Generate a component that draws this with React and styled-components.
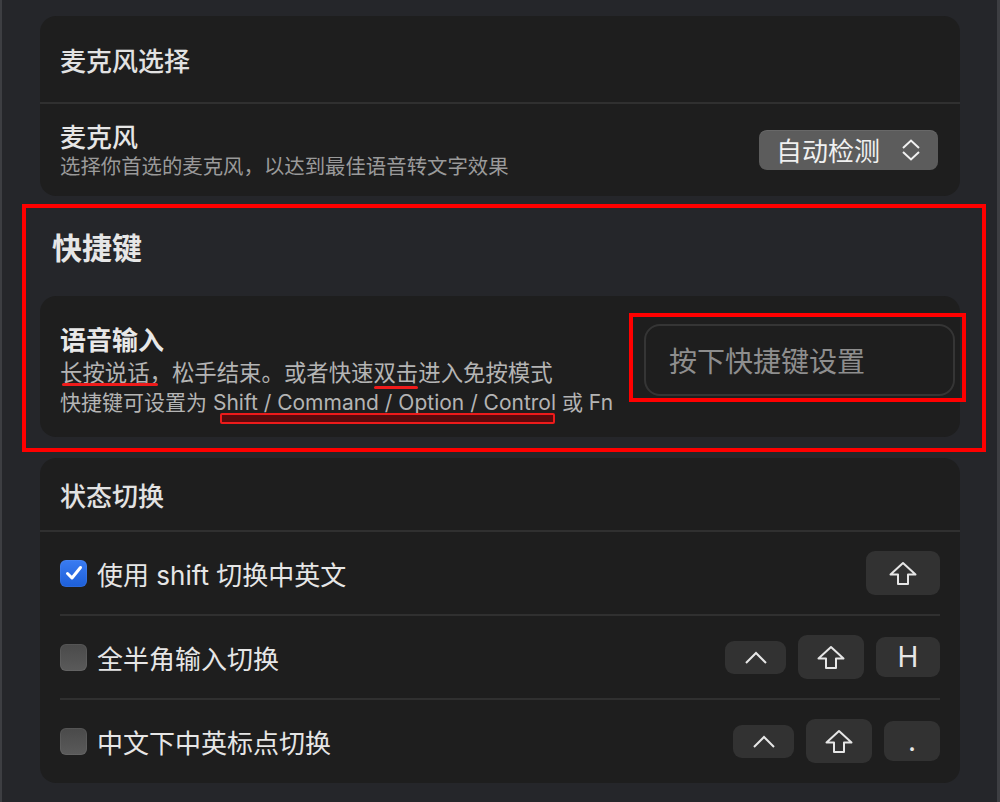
import React from 'react';
import styled, { createGlobalStyle } from 'styled-components';

const GlobalStyle = createGlobalStyle`
  * { box-sizing: border-box; }
  body {
    margin: 0;
    background: #25262a;
    font-family: "Inter", "Noto Sans CJK SC", sans-serif;
    color: #e4e4e4;
  }
`;

function ShiftIcon() {
  return (
    <svg width="30" height="25" viewBox="0 0 30 25" fill="none">
      <path d="M15 2 L27.5 13.5 H20 V23 H10 V13.5 H2.5 Z" stroke="#e6e6e6" strokeWidth="2" strokeLinejoin="round" />
    </svg>
  );
}

function CaretIcon() {
  return (
    <svg width="24" height="13" viewBox="0 0 24 13" fill="none">
      <path d="M2 12 L12 2 L22 12" stroke="#e6e6e6" strokeWidth="2" />
    </svg>
  );
}

function UpDownIcon() {
  return (
    <svg width="20" height="22" viewBox="0 0 20 22" fill="none">
      <path d="M2 9 L10 1.5 L18 9" stroke="#f0f0f0" strokeWidth="2" />
      <path d="M2 13 L10 20.5 L18 13" stroke="#f0f0f0" strokeWidth="2" />
    </svg>
  );
}

function CheckIcon() {
  return (
    <svg width="18" height="16" viewBox="0 0 18 16" fill="none">
      <path d="M2.5 8.5 L7 13 L15.5 2.5" stroke="#fff" strokeWidth="3" strokeLinecap="round" strokeLinejoin="round" />
    </svg>
  );
}

export default function App() {
  return (
    <>
      <GlobalStyle />
      <Page>
        <Card>
          <CardHeader $h={88}>麦克风选择</CardHeader>
          <MicRow>
            <TextCol>
              <RowTitle>麦克风</RowTitle>
              <RowHint>选择你首选的麦克风，以达到最佳语音转文字效果</RowHint>
            </TextCol>
            <Select>
              <span>自动检测</span>
              <UpDownIcon />
            </Select>
          </MicRow>
        </Card>

        <Highlight>
          <SectionHeading>快捷键</SectionHeading>
          <ShortcutCard>
            <ShortcutText>
              <BoldTitle>语音输入</BoldTitle>
              <DescLine $size={22.4}>
                <Mark $l={2} $r={14} $b={0} $h={3}>长按说话，</Mark>松手结束。或者快速<Mark $l={1} $r={0} $b={-3} $h={3}>双击</Mark>进入免按模式
              </DescLine>
              <DescLine $size={21}>
                快捷键可设置为 <Mark $l={7} $r={1} $b={-9} $h={7} $box>Shift / Command / Option / Control</Mark> 或 Fn
              </DescLine>
            </ShortcutText>
            <InputFrame>
              <ShortcutInput>按下快捷键设置</ShortcutInput>
            </InputFrame>
          </ShortcutCard>
        </Highlight>

        <Card>
          <CardHeader $h={74}>状态切换</CardHeader>
          <OptionList>
            <OptionRow>
              <Check $on><CheckIcon /></Check>
              <OptionLabel>使用 shift 切换中英文</OptionLabel>
              <Keys>
                <Key $w={74} $h={44}><ShiftIcon /></Key>
              </Keys>
            </OptionRow>
            <OptionRow>
              <Check />
              <OptionLabel>全半角输入切换</OptionLabel>
              <Keys>
                <Key $w={61} $h={33}><CaretIcon /></Key>
                <Key $w={66} $h={44}><ShiftIcon /></Key>
                <Key $w={64} $h={40}>H</Key>
              </Keys>
            </OptionRow>
            <OptionRow>
              <Check />
              <OptionLabel>中文下中英标点切换</OptionLabel>
              <Keys>
                <Key $w={61} $h={33}><CaretIcon /></Key>
                <Key $w={66} $h={44}><ShiftIcon /></Key>
                <Key $w={56} $h={40}>.</Key>
              </Keys>
            </OptionRow>
          </OptionList>
        </Card>
      </Page>
    </>
  );
}

const Page = styled.div`
  width: 1000px;
  min-height: 802px;
  border-left: 2px solid #3d3e42;
  border-right: 3px solid #3d3e42;
  padding: 16px 37px 18px 38px;
  display: flex;
  flex-direction: column;
`;

const Card = styled.div`
  background: #1e1e1e;
  border-radius: 16px;
  display: flex;
  flex-direction: column;
  padding-bottom: 1px;
`;

const CardHeader = styled.div`
  height: ${p => p.$h}px;
  display: flex;
  align-items: center;
  padding-left: 20px;
  font-size: 26px;
  font-weight: 500;
  color: #e2e2e2;
  border-bottom: 2px solid #303030;
`;

const MicRow = styled.div`
  height: 91px;
  display: flex;
  align-items: center;
  justify-content: space-between;
  padding: 0 22px 0 20px;
`;

const TextCol = styled.div`
  display: flex;
  flex-direction: column;
  padding-top: 2px;
`;

const RowTitle = styled.div`
  font-size: 26px;
  font-weight: 500;
  line-height: 32px;
  color: #e6e6e6;
`;

const RowHint = styled.div`
  font-size: 20.4px;
  line-height: 26px;
  color: #9a9a9a;
`;

const Select = styled.div`
  width: 179px;
  height: 40px;
  border-radius: 8px;
  background: #5c5c5c;
  display: flex;
  align-items: center;
  justify-content: space-between;
  padding: 0 17px 0 17px;
  font-size: 26px;
  color: #f0f0f0;
  box-shadow: inset 0 1px 0 rgba(255, 255, 255, 0.08);
`;

const Highlight = styled.div`
  margin: 8px -26px 6px -18px;
  border: 4px solid #ff0000;
  padding: 0 22px 11px 14px;
  display: flex;
  flex-direction: column;
`;

const SectionHeading = styled.div`
  margin: 22px 0 30px 12px;
  font-size: 30px;
  font-weight: 700;
  line-height: 36px;
  color: #e6e6e6;
`;

const ShortcutCard = styled.div`
  height: 141px;
  background: #1e1e1e;
  border-radius: 16px;
  display: flex;
  align-items: flex-start;
  padding-left: 20px;
`;

const ShortcutText = styled.div`
  flex: 1;
  margin-top: 28px;
  display: flex;
  flex-direction: column;
`;

const BoldTitle = styled.div`
  font-size: 26px;
  font-weight: 700;
  line-height: 34px;
  color: #e8e8e8;
`;

const DescLine = styled.div`
  font-size: ${p => p.$size}px;
  line-height: 30px;
  color: #b4b4b4;
  white-space: nowrap;
`;

const Mark = styled.span`
  position: relative;
  &::after {
    content: '';
    position: absolute;
    left: ${p => p.$l}px;
    right: ${p => p.$r}px;
    bottom: ${p => p.$b}px;
    height: ${p => p.$h}px;
    border-radius: 2px;
    background: ${p => (p.$box ? '#5a0a0c' : '#ee1b1b')};
    border: ${p => (p.$box ? '2px solid #ee1b1b' : 'none')};
  }
`;

const InputFrame = styled.div`
  margin: 17px -6px 0 0;
  width: 337px;
  border: 4px solid #ff0000;
  padding: 7px 7px 2px 11px;
`;

const ShortcutInput = styled.div`
  height: 72px;
  border: 2px solid #353535;
  border-radius: 16px;
  display: flex;
  align-items: center;
  padding-left: 23px;
  font-size: 28px;
  color: #8e8e8e;
`;

const OptionList = styled.div`
  padding: 0 20px;
  display: flex;
  flex-direction: column;
`;

const OptionRow = styled.div`
  height: 82px;
  display: flex;
  align-items: center;
  & + & {
    height: 84px;
    border-top: 2px solid #303030;
  }
`;

const Check = styled.div`
  width: 27px;
  height: 27px;
  border-radius: 6px;
  display: flex;
  align-items: center;
  justify-content: center;
  background: ${p => (p.$on ? 'linear-gradient(#3a7cf2, #1d5fd8)' : 'linear-gradient(#4a4a4a, #5a5a5a)')};
  box-shadow: inset 0 0 0 1px rgba(255, 255, 255, 0.06);
`;

const OptionLabel = styled.div`
  flex: 1;
  margin-left: 10px;
  font-size: 26px;
  color: #e6e6e6;
`;

const Keys = styled.div`
  display: flex;
  align-items: center;
  gap: 12px;
`;

const Key = styled.div`
  width: ${p => p.$w}px;
  height: ${p => p.$h}px;
  border-radius: 9px;
  background: #323232;
  display: flex;
  align-items: center;
  justify-content: center;
  font-size: 28px;
  font-weight: 400;
  color: #e6e6e6;
`;
